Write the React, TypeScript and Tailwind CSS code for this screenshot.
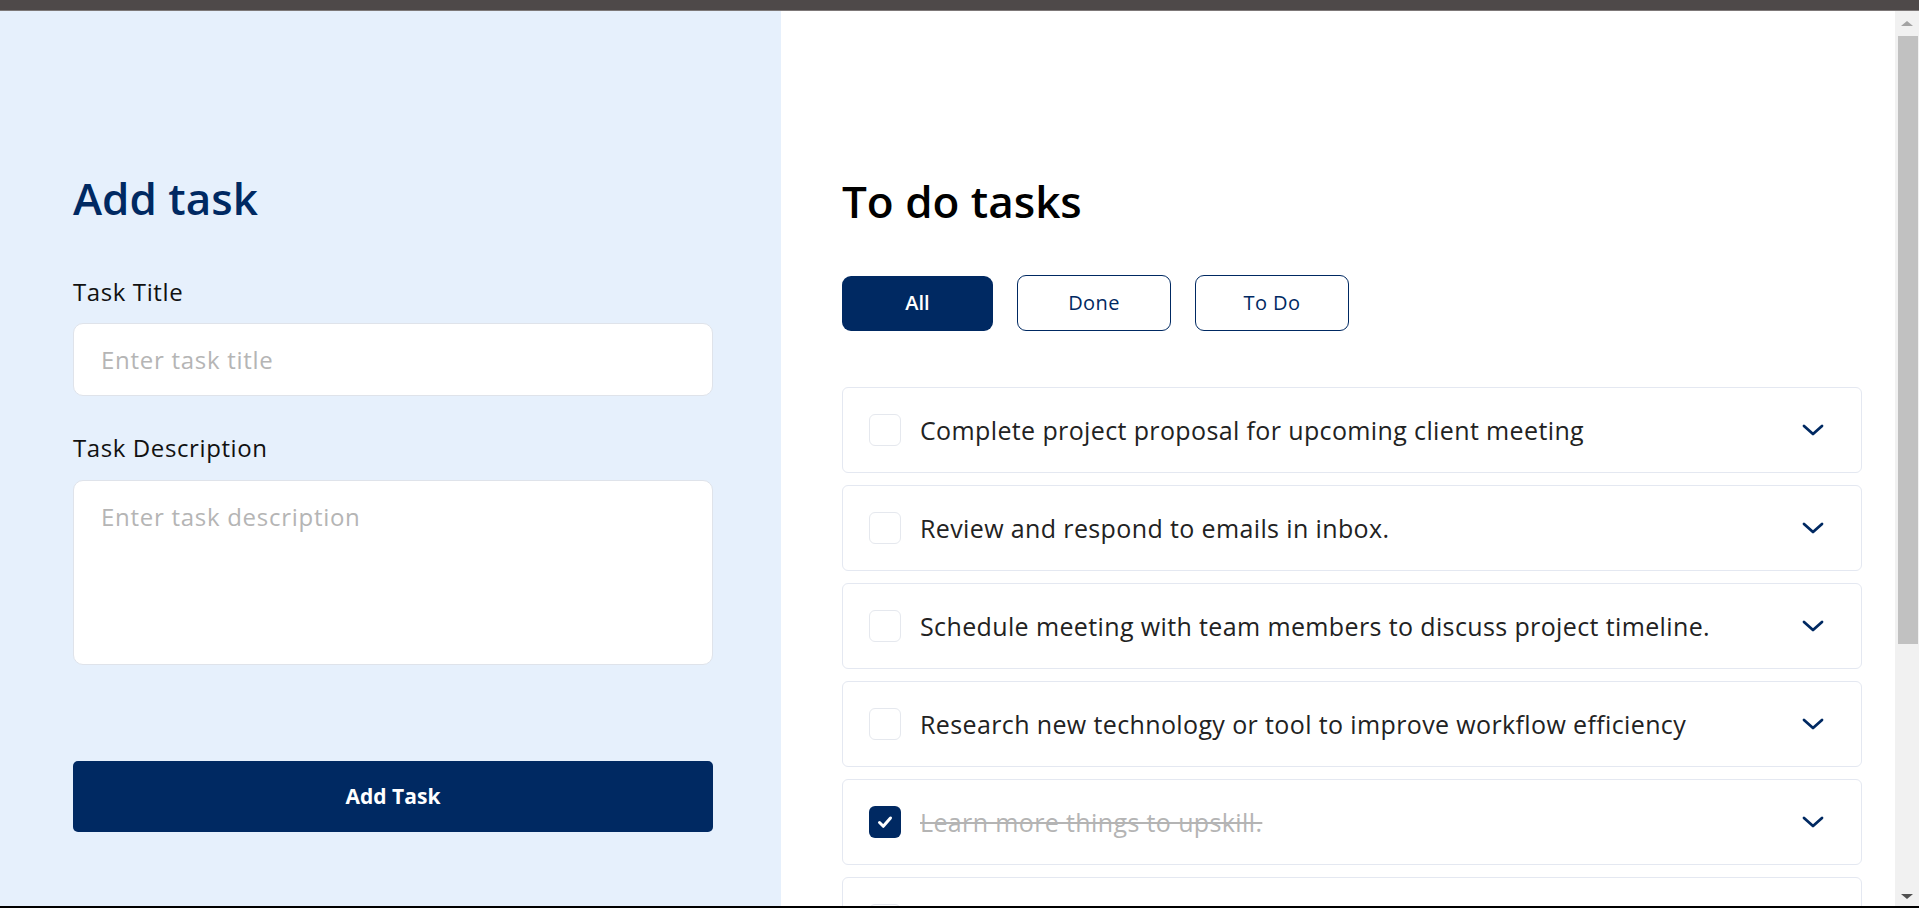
import { useState } from "react";

type Filter = "all" | "done" | "todo";

interface Task {
  id: number;
  title: string;
  done: boolean;
}

const initialTasks: Task[] = [
  { id: 1, title: "Complete project proposal for upcoming client meeting", done: false },
  { id: 2, title: "Review and respond to emails in inbox.", done: false },
  { id: 3, title: "Schedule meeting with team members to discuss project timeline.", done: false },
  { id: 4, title: "Research new technology or tool to improve workflow efficiency", done: false },
  { id: 5, title: "Learn more things to upskill.", done: true },
  { id: 6, title: "Prepare weekly report for the team.", done: false },
];

function Chevron() {
  return (
    <svg width="22" height="12" viewBox="0 0 22 12" fill="none" className="shrink-0">
      <path d="M2 2l9 8 9-8" stroke="#002962" strokeWidth="2.8" strokeLinecap="round" strokeLinejoin="round" />
    </svg>
  );
}

function TaskRow({ task, onToggle }: { task: Task; onToggle: () => void }) {
  return (
    <div className="flex items-center h-[86px] shrink-0 rounded-[6px] border border-[#e4e8f1] bg-white pl-[26px] pr-[37px]">
      <button
        onClick={onToggle}
        className={`w-[32px] h-[32px] shrink-0 rounded-[6px] flex items-center justify-center ${
          task.done ? "bg-[#002962]" : "border border-[#e5e8ee] bg-white"
        }`}
      >
        {task.done && (
          <svg width="16" height="14" viewBox="0 0 16 14" fill="none">
            <path d="M2.5 7.5l3.8 3.8L13.5 3" stroke="white" strokeWidth="3" strokeLinecap="round" strokeLinejoin="round" />
          </svg>
        )}
      </button>
      <span
        className={`ml-[19px] flex-1 text-[25px] leading-none tracking-[0.015em] ${
          task.done ? "text-[#b4b4b4] line-through" : "text-[#222]"
        }`}
      >
        {task.title}
      </span>
      <Chevron />
    </div>
  );
}

export default function App() {
  const [tasks, setTasks] = useState(initialTasks);
  const [filter, setFilter] = useState<Filter>("all");

  const visible = tasks.filter((t) =>
    filter === "all" ? true : filter === "done" ? t.done : !t.done
  );

  const toggle = (id: number) =>
    setTasks((list) => list.map((t) => (t.id === id ? { ...t, done: !t.done } : t)));

  return (
    <div className="h-[908px] w-full flex flex-col overflow-hidden bg-white font-['Open_Sans',sans-serif]">
      {/* window top edge */}
      <div className="h-[10px] shrink-0 bg-[#4e4949]" />
      <div className="h-[1px] shrink-0 bg-[#7d7878]" />

      <div className="flex flex-1 min-h-0">
        {/* Add task panel */}
        <div className="w-[781px] shrink-0 bg-[#e6f0fc] pt-[164px] pl-[73px] pr-[68px] flex flex-col">
          <h1 className="h-[45px] flex items-center text-[44px] leading-none font-semibold text-[#002962]">Add task</h1>

          <label className="mt-[60px] text-[24px] leading-none tracking-[0.025em] text-[#111]">Task Title</label>
          <input
            placeholder="Enter task title"
            className="mt-[19px] h-[73px] w-full rounded-[10px] border border-[#dfe3ea] bg-white px-[27px] text-[24px] tracking-[0.03em] text-[#222] outline-none placeholder:text-[#b5b5b5]"
          />

          <label className="mt-[40px] text-[24px] leading-none tracking-[0.025em] text-[#111]">Task Description</label>
          <textarea
            placeholder="Enter task description"
            className="mt-[20px] h-[185px] w-full resize-none rounded-[10px] border border-[#dfe3ea] bg-white pt-[18px] px-[27px] text-[24px] tracking-[0.03em] text-[#222] outline-none placeholder:text-[#b5b5b5]"
          />

          <button className="mt-[96px] h-[71px] w-full rounded-[5px] bg-[#002962] text-[21px] font-bold text-white">
            Add Task
          </button>
        </div>

        {/* To do panel */}
        <div className="flex-1 min-w-0 pt-[168px] pl-[61px] pr-[33px] flex flex-col">
          <h2 className="h-[45px] flex items-center text-[44px] leading-none font-semibold text-black">To do tasks</h2>

          <div className="mt-[52px] flex items-center gap-[24px]">
            <button
              onClick={() => setFilter("all")}
              className={`w-[151px] h-[55px] rounded-[9px] text-[20px] font-semibold ${
                filter === "all" ? "bg-[#002962] text-white" : "border border-[#002962] text-[#002962]"
              }`}
            >
              All
            </button>
            <button
              onClick={() => setFilter("done")}
              className={`w-[154px] h-[56px] rounded-[9px] text-[20px] font-medium tracking-[0.02em] ${
                filter === "done" ? "bg-[#002962] text-white" : "border border-[#002962] text-[#002962]"
              }`}
            >
              Done
            </button>
            <button
              onClick={() => setFilter("todo")}
              className={`w-[154px] h-[56px] rounded-[9px] text-[20px] font-medium tracking-[0.02em] ${
                filter === "todo" ? "bg-[#002962] text-white" : "border border-[#002962] text-[#002962]"
              }`}
            >
              To Do
            </button>
          </div>

          <div className="mt-[56px] flex flex-col gap-[12px]">
            {visible.map((t) => (
              <TaskRow key={t.id} task={t} onToggle={() => toggle(t.id)} />
            ))}
          </div>
        </div>

        {/* scrollbar */}
        <div className="w-[24px] shrink-0 bg-[#f1f1f1] flex flex-col items-center">
          <div className="h-[25px] flex items-center justify-center">
            <div className="w-0 h-0 border-l-[6px] border-r-[6px] border-b-[5px] border-l-transparent border-r-transparent border-b-[#a3a3a3]" />
          </div>
          <div className="h-[608px] w-[20px] ml-[2px] bg-[#c1c1c1]" />
          <div className="flex-1" />
          <div className="h-[20px] flex items-center justify-center">
            <div className="w-0 h-0 border-l-[6px] border-r-[6px] border-t-[5px] border-l-transparent border-r-transparent border-t-[#505050]" />
          </div>
        </div>
      </div>

      <div className="h-[2px] shrink-0 bg-black" />
    </div>
  );
}
